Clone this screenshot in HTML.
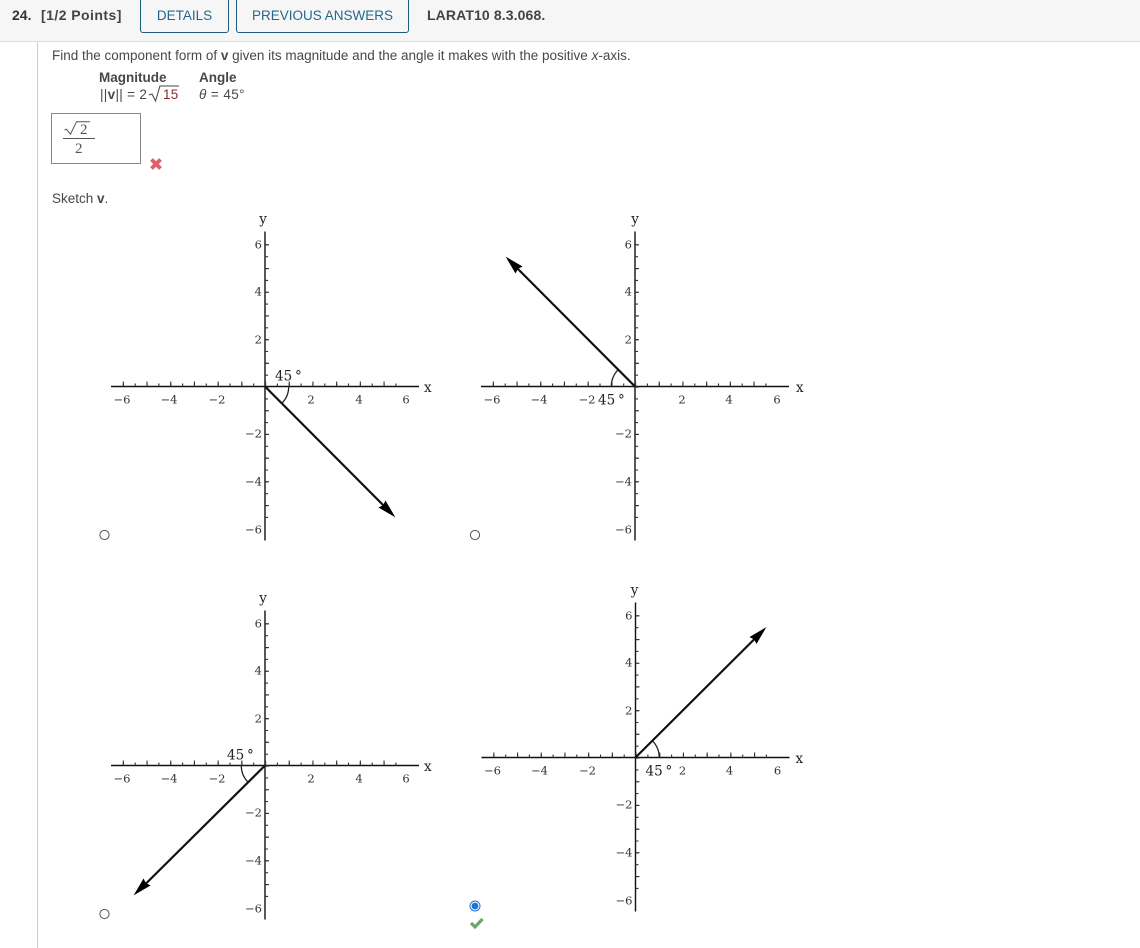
<!DOCTYPE html>
<html><head><meta charset="utf-8"><title>Question 24</title>
<style>
html,body{margin:0;padding:0;background:#fff;width:1140px;height:948px;overflow:hidden}
body{position:relative;font-family:"Liberation Sans",sans-serif;font-size:13.5px;color:#484848}
.hd{position:absolute;left:0;top:0;width:1140px;height:41px;background:#f6f6f6;border-bottom:1px solid #ddd}
.vl{position:absolute;left:37px;top:42px;width:1px;height:906px;background:#ccc}
.t{position:absolute;white-space:nowrap}
.btn{position:absolute;top:-4px;height:35px;border:1px solid #1d5b7a;border-radius:3px;color:#25688c;font-size:13.5px;line-height:37px;text-align:center;box-sizing:content-box}
svg{position:absolute;left:0;top:0}
.s text{font-family:"DejaVu Serif","Liberation Serif",serif;font-size:11.5px;fill:#333}
.s text.m{text-anchor:middle}
.s text.e{text-anchor:end}
.s text.big{font-size:13.5px;fill:#222}
.s text.ax{font-size:13.5px;fill:#222}
.a{stroke:#111;stroke-width:1.4;fill:none}
.mi{stroke:#333;stroke-width:1.1;fill:none}
.v{stroke:#111;stroke-width:2.2;fill:none}
.arc{stroke:#222;stroke-width:1.3;fill:none}
</style></head><body>
<div class="hd"></div><div class="vl"></div>
<div class="t" style="left:12px;top:7px;font-weight:bold;color:#333;font-size:14px">24.</div>
<div class="t" style="left:41px;top:7px;font-weight:bold;color:#444;font-size:14px;letter-spacing:.45px">[1/2 Points]</div>
<div class="btn" style="left:140px;width:87px">DETAILS</div>
<div class="btn" style="left:236px;width:171px">PREVIOUS ANSWERS</div>
<div class="t" style="left:427px;top:7px;font-weight:bold;color:#444;font-size:14px;letter-spacing:.12px">LARAT10 8.3.068.</div>
<div class="t" style="left:52px;top:48px">Find the component form of <b>v</b> given its magnitude and the angle it makes with the positive <i>x</i>-axis.</div>
<div class="t" style="left:99px;top:70px;font-weight:bold">Magnitude</div>
<div class="t" style="left:199px;top:70px;font-weight:bold">Angle</div>
<div class="t" style="left:100px;top:87px;letter-spacing:.3px">||<b>v</b>|| = 2</div>
<div class="t" style="left:163px;top:87px;color:#8c2a2a;letter-spacing:.3px">15</div>
<div class="t" style="left:199px;top:87px;letter-spacing:.4px"><i>θ</i> = 45°</div>
<div class="t" style="left:51px;top:113px;width:88px;height:49px;border:1px solid #888"></div>
<div class="t" style="left:80px;top:123px;font-family:'Liberation Serif',serif;font-size:15px;line-height:15px;color:#555">2</div>
<div class="t" style="left:63px;top:138px;width:32px;height:1px;background:#555"></div>
<div class="t" style="left:75px;top:142px;font-family:'Liberation Serif',serif;font-size:15px;line-height:15px;color:#555">2</div>
<div class="t" style="left:52px;top:191px">Sketch <b>v</b>.</div>

<svg width="1140" height="948" viewBox="0 0 1140 948">
<!-- sqrt of magnitude -->
<path d="M149 95l3 -1l3.5 7l4.5 -15h19" stroke="#444" stroke-width="1" fill="none"/>
<!-- sqrt in answer box -->
<path d="M64.5 130l2 -.8l4 5l6 -12.5h13.5" stroke="#555" stroke-width="1" fill="none"/>
<!-- red x -->
<path d="M151.5 159.5l9 9M160.5 159.5l-9 9" stroke="#e0606a" stroke-width="4"/>

<!-- chart 1 -->
<g class="s" transform="translate(265,386.5)">
<path class="a" d="M-154 0H154M0 -155V154"/>
<path class="mi" d="M-142.2 -1.5H142.2" style="stroke-width:3;stroke-dasharray:1.1 10.75"/>
<path class="mi" d="M1.5 -142.2V142.2" style="stroke-width:3;stroke-dasharray:1.1 10.75"/>
<path class="mi" d="M-142.2 -2.5H142.2" style="stroke-width:5;stroke-dasharray:1.1 22.6"/>
<path class="mi" d="M2 -142.2V142.2" style="stroke-width:4;stroke-dasharray:1.1 22.6"/>
<text class="m" x="-143" y="17">−6</text><text class="m" x="-96" y="17">−4</text><text class="m" x="-48" y="17">−2</text>
<text class="m" x="46" y="17">2</text><text class="m" x="94" y="17">4</text><text class="m" x="141" y="17">6</text>
<text class="e" x="-3" y="-138">6</text><text class="e" x="-3" y="-91">4</text><text class="e" x="-3" y="-43">2</text>
<text class="e" x="-3" y="51">−2</text><text class="e" x="-3" y="99">−4</text><text class="e" x="-3" y="147">−6</text>
<text class="ax" x="159" y="5.5">x</text><text class="ax m" x="-2" y="-163">y</text>
<text class="big" x="10" y="-6">45</text><text class="big" x="30" y="-6">°</text>
<path class="arc" d="M23.7 0A23.7 23.7 0 0 1 16.8 16.8"/>
<path class="v" d="M0 0L119 119.5"/>
<path d="M129 129.5L114.5 121L118.5 119L120.5 115Z" fill="#000" stroke="#000" stroke-width="1"/>
</g>

<!-- chart 2 -->
<g class="s" transform="translate(635,386.5)">
<path class="a" d="M-154 0H154M0 -155V154"/>
<path class="mi" d="M-142.2 -1.5H142.2" style="stroke-width:3;stroke-dasharray:1.1 10.75"/>
<path class="mi" d="M1.5 -142.2V142.2" style="stroke-width:3;stroke-dasharray:1.1 10.75"/>
<path class="mi" d="M-142.2 -2.5H142.2" style="stroke-width:5;stroke-dasharray:1.1 22.6"/>
<path class="mi" d="M2 -142.2V142.2" style="stroke-width:4;stroke-dasharray:1.1 22.6"/>
<text class="m" x="-143" y="17">−6</text><text class="m" x="-96" y="17">−4</text><text class="m" x="-48" y="17">−2</text>
<text class="m" x="47" y="17">2</text><text class="m" x="94" y="17">4</text><text class="m" x="142" y="17">6</text>
<text class="e" x="-3" y="-138">6</text><text class="e" x="-3" y="-91">4</text><text class="e" x="-3" y="-43">2</text>
<text class="e" x="-3" y="51">−2</text><text class="e" x="-3" y="99">−4</text><text class="e" x="-3" y="147">−6</text>
<text class="ax" x="161" y="5.5">x</text><text class="ax m" x="0" y="-163">y</text>
<text class="big" x="-37" y="18">45</text><text class="big" x="-17" y="18">°</text>
<path class="arc" d="M-23.7 0A23.7 23.7 0 0 1 -16.8 -16.8"/>
<path class="v" d="M0 0L-118 -118.5"/>
<path d="M-128 -128.5L-119.5 -114L-117.5 -118L-113.5 -120Z" fill="#000" stroke="#000" stroke-width="1"/>
</g>

<!-- chart 3 -->
<g class="s" transform="translate(265,765.5)">
<path class="a" d="M-154 0H154M0 -155V154"/>
<path class="mi" d="M-142.2 -1.5H142.2" style="stroke-width:3;stroke-dasharray:1.1 10.75"/>
<path class="mi" d="M1.5 -142.2V142.2" style="stroke-width:3;stroke-dasharray:1.1 10.75"/>
<path class="mi" d="M-142.2 -2.5H142.2" style="stroke-width:5;stroke-dasharray:1.1 22.6"/>
<path class="mi" d="M2 -142.2V142.2" style="stroke-width:4;stroke-dasharray:1.1 22.6"/>
<text class="m" x="-143" y="17">−6</text><text class="m" x="-96" y="17">−4</text><text class="m" x="-48" y="17">−2</text>
<text class="m" x="46" y="17">2</text><text class="m" x="94" y="17">4</text><text class="m" x="141" y="17">6</text>
<text class="e" x="-3" y="-138">6</text><text class="e" x="-3" y="-91">4</text><text class="e" x="-3" y="-43">2</text>
<text class="e" x="-3" y="51">−2</text><text class="e" x="-3" y="99">−4</text><text class="e" x="-3" y="147">−6</text>
<text class="ax" x="159" y="5.5">x</text><text class="ax m" x="-2" y="-163">y</text>
<text class="big" x="-38" y="-6">45</text><text class="big" x="-18" y="-6">°</text>
<path class="arc" d="M-23.7 0A23.7 23.7 0 0 0 -16.8 16.8"/>
<path class="v" d="M0 0L-120 119"/>
<path d="M-130 128.5L-121.5 114L-119.5 118L-115.5 120Z" fill="#000" stroke="#000" stroke-width="1"/>
</g>

<!-- chart 4 -->
<g class="s" transform="translate(635.5,757.5)">
<path class="a" d="M-154 0H154M0 -155V154"/>
<path class="mi" d="M-142.2 -1.5H142.2" style="stroke-width:3;stroke-dasharray:1.1 10.75"/>
<path class="mi" d="M1.5 -142.2V142.2" style="stroke-width:3;stroke-dasharray:1.1 10.75"/>
<path class="mi" d="M-142.2 -2.5H142.2" style="stroke-width:5;stroke-dasharray:1.1 22.6"/>
<path class="mi" d="M2 -142.2V142.2" style="stroke-width:4;stroke-dasharray:1.1 22.6"/>
<text class="m" x="-143" y="17">−6</text><text class="m" x="-96" y="17">−4</text><text class="m" x="-48" y="17">−2</text>
<text class="m" x="47" y="17">2</text><text class="m" x="94" y="17">4</text><text class="m" x="142" y="17">6</text>
<text class="e" x="-3" y="-138">6</text><text class="e" x="-3" y="-91">4</text><text class="e" x="-3" y="-43">2</text>
<text class="e" x="-3" y="51">−2</text><text class="e" x="-3" y="99">−4</text><text class="e" x="-3" y="147">−6</text>
<text class="ax" x="160" y="5.5">x</text><text class="ax m" x="-1" y="-163">y</text>
<text class="big" x="10" y="18">45</text><text class="big" x="30" y="18">°</text>
<path class="arc" d="M23.7 0A23.7 23.7 0 0 0 16.8 -16.8"/>
<path class="v" d="M0 0L119.5 -119"/>
<path d="M129.5 -129L121 -114.5L119 -118.5L115 -120.5Z" fill="#000" stroke="#000" stroke-width="1"/>
</g>

<!-- radios -->
<circle cx="104.5" cy="535" r="4.6" fill="#fff" stroke="#555" stroke-width="1"/>
<circle cx="475" cy="535" r="4.6" fill="#fff" stroke="#555" stroke-width="1"/>
<circle cx="104.5" cy="914" r="4.6" fill="#fff" stroke="#555" stroke-width="1"/>
<circle cx="475" cy="906" r="5" fill="#fff" stroke="#1a73d8" stroke-width="1"/>
<circle cx="475" cy="906" r="3.4" fill="#1a73d8"/>
<path d="M471 923l4 4l7.5 -8" stroke="#6aa86a" stroke-width="3.2" fill="none"/>
</svg>
</body></html>
